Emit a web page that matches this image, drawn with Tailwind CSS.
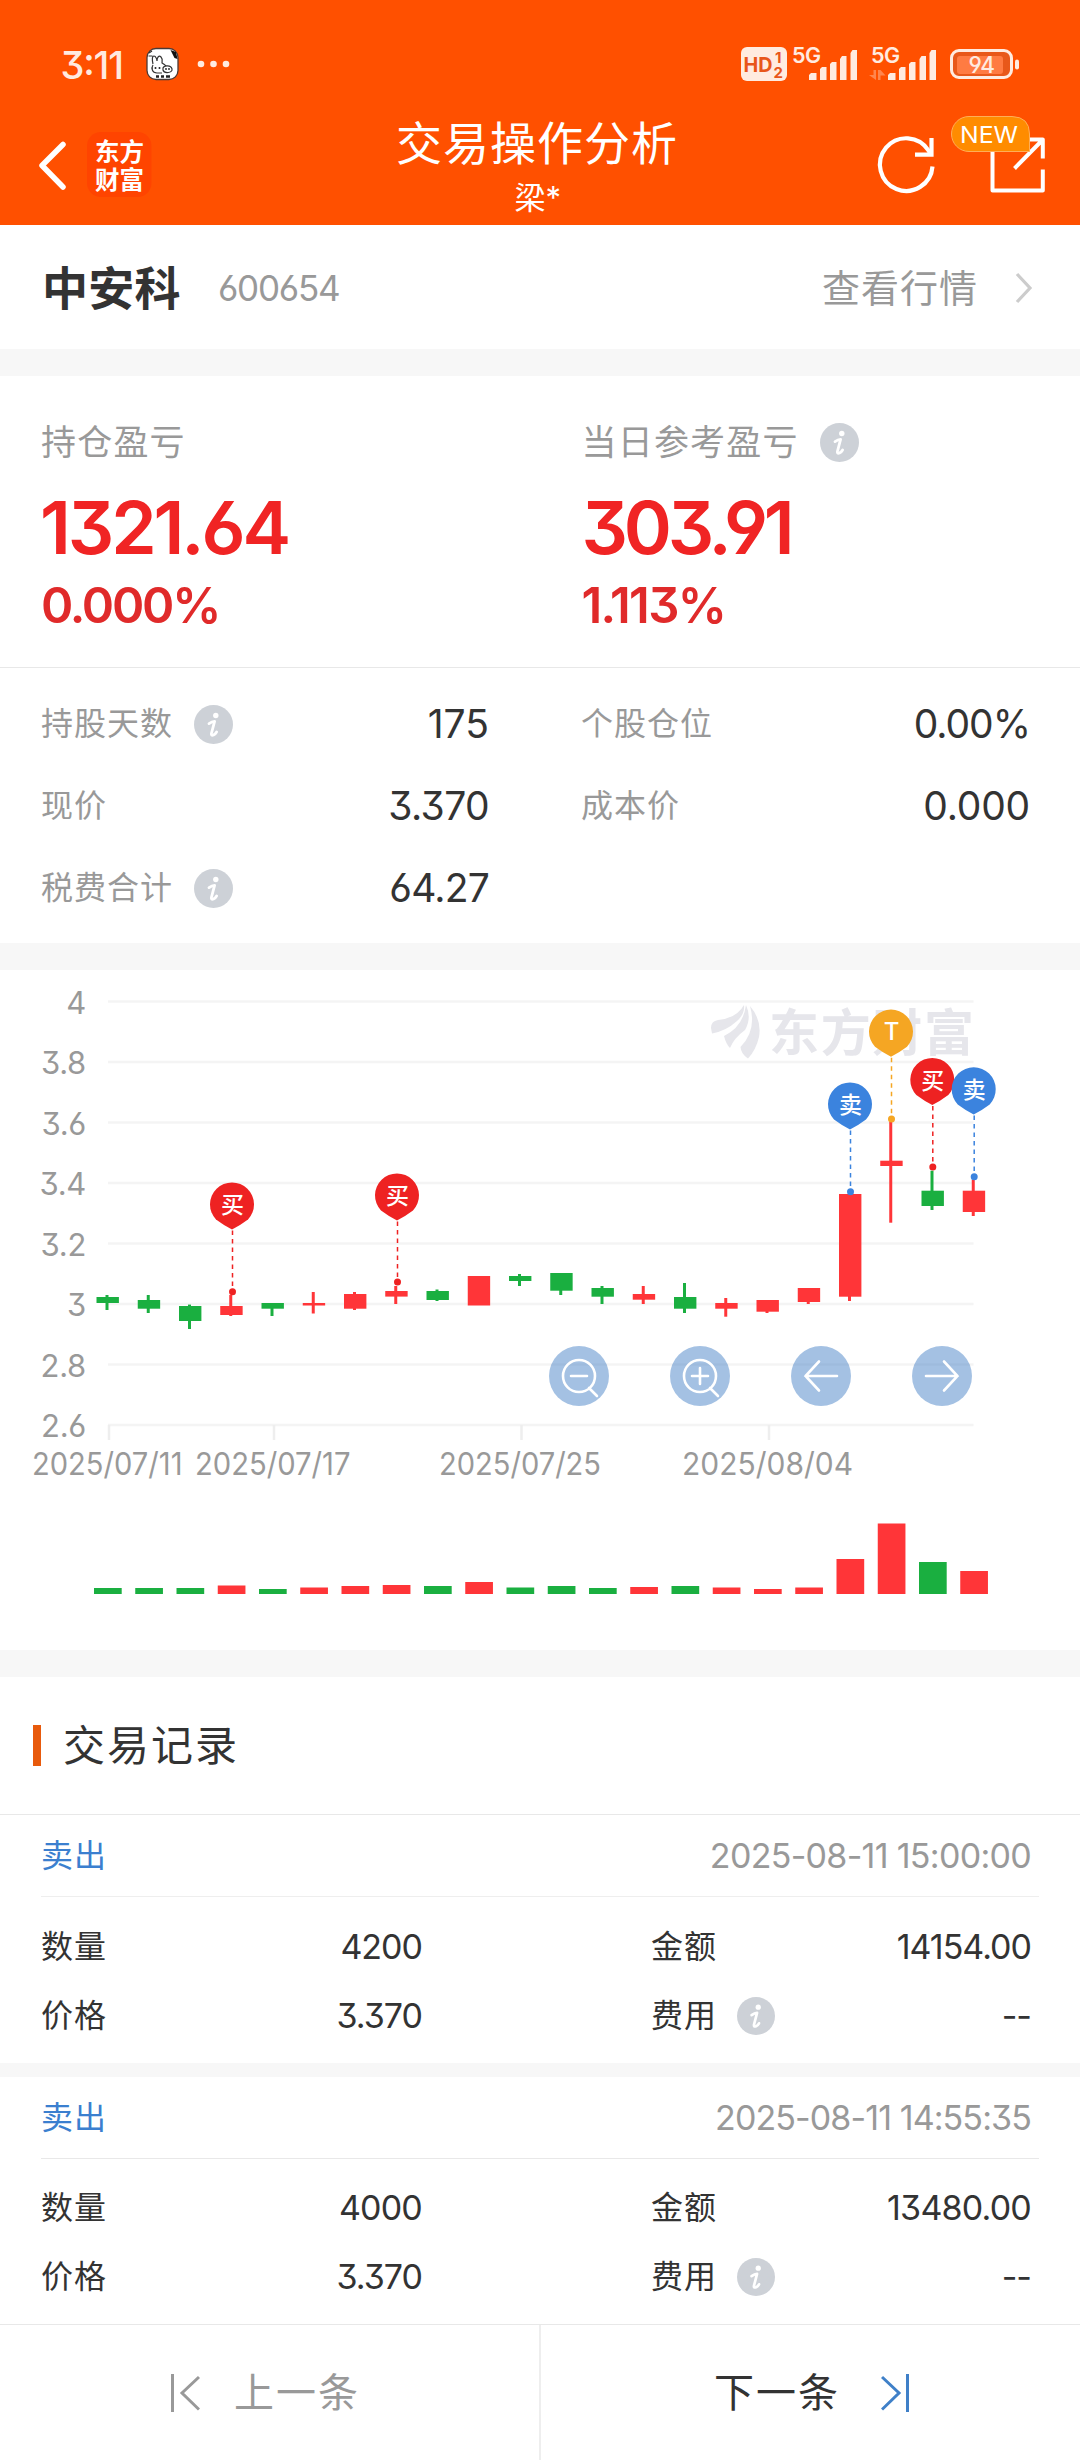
<!DOCTYPE html>
<html lang="zh-CN">
<head>
<meta charset="utf-8">
<title>交易操作分析</title>
<script src="https://cdn.jsdelivr.net/npm/@tailwindcss/browser@4"></script>
</head>
<body class="w-[1080px] h-[2460px] overflow-hidden bg-[#f7f7f7] text-[#333] font-[Inter,'Noto_Sans_CJK_SC',sans-serif] [font-feature-settings:'cv03','cv04','cv09'] whitespace-nowrap">
<svg class="hidden">
  <symbol id="info" viewBox="0 0 39 39">
    <circle cx="19.5" cy="19.5" r="19.5" fill="#cdd1d7"/>
    <circle cx="21.8" cy="10.5" r="2.7" fill="#fff"/>
    <path d="M15 18.600 Q18 16.500 20.600 16.300 L17.400 28.500 Q17 31 19.500 30 Q21.500 29 22.600 27" fill="none" stroke="#fff" stroke-width="2.8" stroke-linecap="round" stroke-linejoin="round"/>
  </symbol>
</svg>
<div class="flex flex-col h-[2460px]">

  <!-- header -->
  <header class="h-[225px] bg-[#ff5000] text-white shrink-0">
    <svg width="1080" height="225" viewBox="0 0 1080 225" fill="none">
      <g fill="#ffebe0">
        <text x="60.500" y="79" font-size="38" font-weight="500" textLength="63.500">3:11</text>
        <circle cx="201" cy="64" r="3.3"/><circle cx="213.500" cy="64" r="3.3"/><circle cx="226" cy="64" r="3.3"/>
      </g>
      <!-- notification app icon -->
      <rect x="147" y="48.500" width="31" height="31" rx="9" fill="#fff" stroke="#4a3a36" stroke-width="1.3"/>
      <path d="M170.500 50l5.500 2 1.500 7-3-1-2-4z" fill="#111"/>
      <path d="M153 65c-2 3-1 8 4 8h5M153 64c-1-4-1-8 1-8s3 4 3 5c0-4 2-6 4-4s1 5 1 6c2 1 3 2 4 3M163 68c1-3 8-3 9 1s-8 5-9 1zM149 53l3-2M148.500 56h4" stroke="#333" stroke-width="1.200"/>
      <path d="M156 76.500h3m2 0h3m2 0h4" stroke="#222" stroke-width="2.500"/>
      <circle cx="155.500" cy="68" r="1" fill="#222"/><circle cx="159.500" cy="68" r="1" fill="#222"/><circle cx="166" cy="69" r=".9" fill="#222"/><circle cx="169" cy="69" r=".9" fill="#222"/>
      <!-- HD badge -->
      <rect x="741" y="47" width="46" height="34" rx="6" fill="#ffebe0"/>
      <g fill="#e8561a" font-weight="700">
        <text x="743.500" y="71.500" font-size="20.500" textLength="29" lengthAdjust="spacingAndGlyphs">HD</text>
        <text x="775" y="62.500" font-size="15">1</text>
        <text x="773.500" y="77.500" font-size="15">2</text>
      </g>
      <g fill="#ffebe0">
        <text x="792" y="62.500" font-size="21.500" font-weight="600" textLength="29">5G</text>
        <path d="M809 80v-5l2-2h5.500v7zM820 80v-11l2-2h4.500v13zM830 80v-16l2-2h4.500v18zM840 80v-21l2-3h4.500v24zM850.500 80v-27l2-3h4.500v30z"/>
        <text x="871" y="62.500" font-size="21.500" font-weight="600" textLength="29">5G</text>
        <path d="M888 80v-5l2-2h5.500v7zM899 80v-11l2-2h4.500v13zM909 80v-16l2-2h4.500v18zM919.500 80v-21l2-3h4.500v24zM929.500 80v-27l2-3h4.500v30z"/>
        <path d="M869 75h4.500v-5h2.500v10zM878 70h2.500v10h-2.500zM880.500 70l5 5.500h-5z" opacity=".35"/>
        <rect x="951.500" y="50.500" width="60" height="27" rx="7.500" fill="#e8581a" stroke="#ffebe0" stroke-width="3"/>
        <rect x="957" y="56" width="46" height="18" rx="3" fill="#ff7b42"/>
        <rect x="1015" y="59.500" width="4" height="10" rx="2"/>
        <text x="968.500" y="73" font-size="22.500" font-weight="500" textLength="26.500">94</text>
      </g>
      <!-- back -->
      <path d="M63 144.500L42 165.500L63 187" stroke="#fff" stroke-width="5.500" stroke-linecap="round" stroke-linejoin="round"/>
      <rect x="87" y="132" width="64.500" height="65" rx="14" fill="#ff4400"/>
      <g fill="#fff" font-size="24.500" font-weight="700">
        <text x="95" y="161" textLength="49">东方</text>
        <text x="95" y="189" textLength="49">财富</text>
      </g>
      <text x="396" y="159.500" font-size="46" fill="#fff" textLength="281">交易操作分析</text>
      <text x="514.500" y="208.500" font-size="31" fill="#fff">梁*</text>
      <!-- refresh -->
      <path d="M932.500 166.500A26.300 26.300 0 1 1 928.500 150.500L931 154" stroke="#fff" stroke-width="4.200"/>
      <path d="M931.500 138v16.700H915" stroke="#fff" stroke-width="4.200"/>
      <!-- share -->
      <path d="M1020 139.500H992.500V190.500H1042.800V169.500M1027 139.500H1042.800V158.500M1042 140.500L1014.500 168.500" stroke="#fff" stroke-width="4" stroke-linejoin="round"/>
      <path d="M969 116.500H1012Q1029.500 117 1029.500 134V151.500H969A17.500 17.500 0 0 1 969 116.500z" fill="#ff8c00" stroke="#ffae57" stroke-width="1"/>
      <text x="960" y="143" font-size="23.500" fill="#fff" textLength="58" lengthAdjust="spacingAndGlyphs">NEW</text>
    </svg>
  </header>

  <!-- stock -->
  <section class="h-[124px] bg-white flex items-center pl-[42px] pr-[47px] pt-[2px] shrink-0">
    <h1 class="text-[46px] leading-[60px] font-bold tracking-[0.3px]">中安科</h1>
    <span class="ml-[37px] text-[35px] text-[#999] tracking-[-1.2px]">600654</span>
    <span class="ml-auto text-[38px] leading-[50px] text-[#999] tracking-[1px]">查看行情</span>
    <svg class="ml-[37px]" width="18" height="34" fill="none"><path d="M2 3L15 17L2 31" stroke="#ccc" stroke-width="3.200"/></svg>
  </section>

  <!-- profit -->
  <section class="mt-[27px] h-[291px] bg-white grid grid-cols-2 pl-[41px] pt-[41px] shrink-0">
    <div class="w-[498px]">
      <div class="h-[50px] flex items-center text-[35px] text-[#999] tracking-[1.2px]">持仓盈亏</div>
      <div class="mt-[21px] h-[80px] leading-[80px] text-[73px] font-semibold text-[#f02424] tracking-[-3.1px] -ml-px">1321.64</div>
      <div class="mt-[13px] h-[50px] leading-[50px] text-[49px] font-semibold text-[#e02a2a] tracking-[-2.2px]">0.000%</div>
    </div>
    <div class="pl-[21px]">
      <div class="h-[50px] flex items-center text-[35px] text-[#999] tracking-[1.2px]">当日参考盈亏<svg class="ml-[21px]" width="39" height="39"><use href="#info"/></svg></div>
      <div class="mt-[21px] h-[80px] leading-[80px] text-[73px] font-semibold text-[#f02424] tracking-[-4.2px]">303.91</div>
      <div class="mt-[13px] h-[50px] leading-[50px] text-[49px] font-semibold text-[#e02a2a] tracking-[-1.7px]">1.113%</div>
    </div>
  </section>
  <section class="h-[276px] border-t border-[#e8e8e8] bg-white grid grid-cols-[448px_449px] grid-rows-[82px_82px_82px] gap-x-[92px] pl-[41px] pt-[15px] text-[32px] text-[#999] shrink-0">
    <div class="flex items-center tracking-[1px]">持股天数<svg class="ml-[21px]" width="39" height="39"><use href="#info"/></svg><b class="ml-auto font-normal text-[39px] text-[#333] tracking-[0px]">175</b></div>
    <div class="flex items-center tracking-[1px]">个股仓位<b class="ml-auto font-normal text-[39px] text-[#333] tracking-[-1px]">0.00%</b></div>
    <div class="flex items-center tracking-[1px]">现价<b class="ml-auto font-normal text-[39px] text-[#333] tracking-[-0.6px]">3.370</b></div>
    <div class="flex items-center tracking-[1px]">成本价<b class="ml-auto font-normal text-[39px] text-[#333] tracking-[-0.2px]">0.000</b></div>
    <div class="flex items-center tracking-[1px]">税费合计<svg class="ml-[21px]" width="39" height="39"><use href="#info"/></svg><b class="ml-auto font-normal text-[39px] text-[#333] tracking-[-0.8px]">64.27</b></div>
  </section>

  <!-- chart -->
  <section class="mt-[27px] h-[680px] bg-white shrink-0">
    <svg id="chart" width="1080" height="680" viewBox="0 970 1080 680"></svg>
  </section>

  <!-- records -->
  <section class="mt-[27px] h-[137px] bg-white flex items-center pl-[33px] shrink-0">
    <i class="w-[8px] h-[41px] bg-[#e85a0c]"></i>
    <h2 class="ml-[22px] text-[42px] leading-[56px] tracking-[2px]">交易记录</h2>
  </section>
  <section class="h-[249px] border-t border-[#e8e8e8] bg-white pl-[41px] pr-[41px] shrink-0">
    <div class="h-[82px] border-b border-[#eee] flex items-center justify-between pr-[8px]">
      <span class="text-[32px] text-[#3b7fcf] tracking-[1px]">卖出</span>
      <time class="text-[34px] text-[#999] tracking-[-0.7px]">2025-08-11 15:00:00</time>
    </div>
    <div class="grid grid-cols-[381px_380px] grid-rows-[69px_69px] gap-x-[229px] pt-[15px] text-[32px]">
      <div class="flex items-center tracking-[1px]">数量<b class="ml-auto font-normal text-[34px] tracking-[-1px]">4200</b></div>
      <div class="flex items-center tracking-[1px]">金额<b class="ml-auto font-normal text-[34px] tracking-[-1px]">14154.00</b></div>
      <div class="flex items-center tracking-[1px]">价格<b class="ml-auto font-normal text-[34px] tracking-[-1px]">3.370</b></div>
      <div class="flex items-center tracking-[1px]">费用<svg class="ml-[20px]" width="38" height="38"><use href="#info"/></svg><b class="ml-auto font-normal text-[34px] tracking-[-1px]">--</b></div>
    </div>
  </section>
  <section class="mt-[14px] h-[247px] bg-white pl-[41px] pr-[41px] shrink-0">
    <div class="h-[82px] border-b border-[#e8e8e8] flex items-center justify-between pr-[8px]">
      <span class="text-[32px] text-[#3b7fcf] tracking-[1px]">卖出</span>
      <time class="text-[34px] text-[#999] tracking-[-0.9px]">2025-08-11 14:55:35</time>
    </div>
    <div class="grid grid-cols-[381px_380px] grid-rows-[69px_69px] gap-x-[229px] pt-[14px] text-[32px]">
      <div class="flex items-center tracking-[1px]">数量<b class="ml-auto font-normal text-[34px] tracking-[-0.8px]">4000</b></div>
      <div class="flex items-center tracking-[1px]">金额<b class="ml-auto font-normal text-[34px] tracking-[-0.8px]">13480.00</b></div>
      <div class="flex items-center tracking-[1px]">价格<b class="ml-auto font-normal text-[34px] tracking-[-1px]">3.370</b></div>
      <div class="flex items-center tracking-[1px]">费用<svg class="ml-[20px]" width="38" height="38"><use href="#info"/></svg><b class="ml-auto font-normal text-[34px] tracking-[-1px]">--</b></div>
    </div>
  </section>

  <!-- pager -->
  <nav class="flex-1 border-t border-[#e8e8e8] bg-white grid grid-cols-[541px_539px] text-[40px]">
    <div class="flex items-center border-r-2 border-[#eee] pl-[170px] text-[#999]">
      <svg width="30" height="38" fill="none" stroke="#999" stroke-width="3"><path d="M2.500 0V38M29 3L12 19L29 35.500"/></svg>
      <span class="ml-[34px] tracking-[2px]">上一条</span>
    </div>
    <div class="flex items-center pl-[173px]">
      <span class="tracking-[2px]">下一条</span>
      <svg class="ml-[41px]" width="30" height="38" fill="none" stroke="#3f80c8" stroke-width="3"><path d="M26.500 0V38M1 3L18 19L1 35.500"/></svg>
    </div>
  </nav>
</div>

<script>
const R = '#ff3538', G = '#1aaf40';
let s = '';
// grid and price axis
['4','3.8','3.6','3.4','3.2','3','2.8','2.6'].forEach((t, i) => {
  const y = 1001.5 + i * 60.5;
  s += `<path d="M108 ${y}H973.500" stroke="#f4f4f4" stroke-width="2.400"/>`;
  s += `<text x="86" y="${y + 12}" text-anchor="end" font-size="31" letter-spacing="-.3" fill="#999">${t}</text>`;
});
[109, 274, 521.5, 769].forEach(x => s += `<path d="M${x} 1425V1440" stroke="#eee" stroke-width="2.500"/>`);
[['2025/07/11',32,150.5],['2025/07/17',195,155.5],['2025/07/25',439,162],['2025/08/04',682,171]].forEach(([t,x,w]) =>
  s += `<text x="${x}" y="1475" font-size="31.500" fill="#999" textLength="${w}" lengthAdjust="spacingAndGlyphs">${t}</text>`);
// brand watermark
s += `<g fill="#e6e6eb"><path d="M711 1028Q711 1021 718 1020Q737 1018 744 1005Q745 1014 737 1021Q726 1031 712 1033.500Z"/>
<path d="M746 1005Q752 1018 745 1030Q734 1038 730 1048Q726 1044 724 1036Q743 1027 746 1005Z"/>
<path d="M750 1006Q762 1020 759 1037Q756 1050 748 1058.500Q741 1054 740.500 1047Q757 1030 750 1006Z"/>
<text x="769" y="1051" font-size="50" font-weight="700" textLength="205">东方财富</text></g>`;
// candles: [colour, open/close top, bottom, high, low, volume top]
[[G,1297,1303,1295,1310,1588],[G,1300,1308.7,1295,1313,1588],[G,1306,1321,1304.6,1329,1588],[R,1306,1315,1295,1316,1585.5],
 [G,1303,1308.7,1303,1316,1589],[R,1303,1305.5,1292,1313.5,1587.5],[R,1294,1308.7,1292,1310,1586],[R,1291,1296.6,1286,1304,1585],
 [G,1291,1300,1289.5,1301,1586],[R,1276,1305.5,1276,1305,1582],[G,1276,1281,1274,1286,1587.5],[G,1273,1290.7,1273,1295,1586],
 [G,1288,1296.7,1286,1304,1588],[R,1294,1299.7,1286,1304,1587],[G,1297,1308.7,1283,1313,1586],[R,1303,1308.7,1298,1316.7,1587.5],
 [R,1300,1311.7,1300,1313,1589],[R,1288,1302,1288,1304,1587.5],[R,1194,1296.7,1194,1301,1559],[R,1160.7,1166,1122,1222.7,1523.5],
 [G,1190.7,1206,1170.7,1210,1562],[R,1190.7,1212,1179.7,1216,1571]].forEach(([c,t,b,h,l,v], i) => {
  const x = 107.5 + i * 41.25;
  s += `<path d="M${x-.5} ${h}V${l}" stroke="${c}" stroke-width="3"/><rect x="${x-11}" y="${t}" width="22.400" height="${b-t}" fill="${c}"/>`;
  s += `<rect x="${x-13.5}" y="${v}" width="27.700" height="${1594-v}" fill="${c}"/>`;
});
// trade markers: [x, pin centre y, dot y, colour, label]
[[232,1204.5,1291.7,'#ee2222','买'],[397,1195.5,1282,'#ee2222','买'],[850,1104.5,1191.7,'#3b83de','卖'],
 [891,1031.7,1119,'#f5a623','T'],[932.3,1080,1167,'#ee2222','买'],[973.7,1089.4,1176.7,'#3b83de','卖']].forEach(([x,y,d,c,t]) => {
  s += `<path d="M${x+.5} ${y+26}V${d}" stroke="${c}" stroke-width="1.500" stroke-dasharray="4.500 4"/><circle cx="${x+.5}" cy="${d}" r="3.500" fill="${c}"/>`;
  s += `<path d="M${x-16} ${y+15}A22 22 0 1 1 ${x+16} ${y+15}Q${x+8} ${y+21} ${x} ${y+25}Q${x-8} ${y+21} ${x-16} ${y+15}Z" fill="${c}"/>`;
  s += `<text x="${x+.5}" y="${y+(t=='T'?8.500:8.5)}" text-anchor="middle" font-size="${t=='T'?24:23}" font-weight="500" fill="#fff">${t}</text>`;
});
// zoom and pan buttons
const mag = 'M16 0A16 16 0 1 1 -16 0A16 16 0 1 1 16 0M10 12L18 20M-8 0H8';
[[579,mag],[700,mag+'M0 -8V8'],[821,'M16 0H-15.500M-2 -14.500L-15.500 0L-2 14.500'],[942,'M-16 0H15.500M2 -14.500L15.500 0L2 14.500']].forEach(([x,d]) =>
  s += `<g transform="translate(${x} 1376)"><circle r="30" fill="#3e7bc3" fill-opacity=".47"/><path d="${d}" fill="none" stroke="#fff" stroke-width="2.600" stroke-linecap="round"/></g>`);
document.getElementById('chart').innerHTML = s;
</script>
</body>
</html>
